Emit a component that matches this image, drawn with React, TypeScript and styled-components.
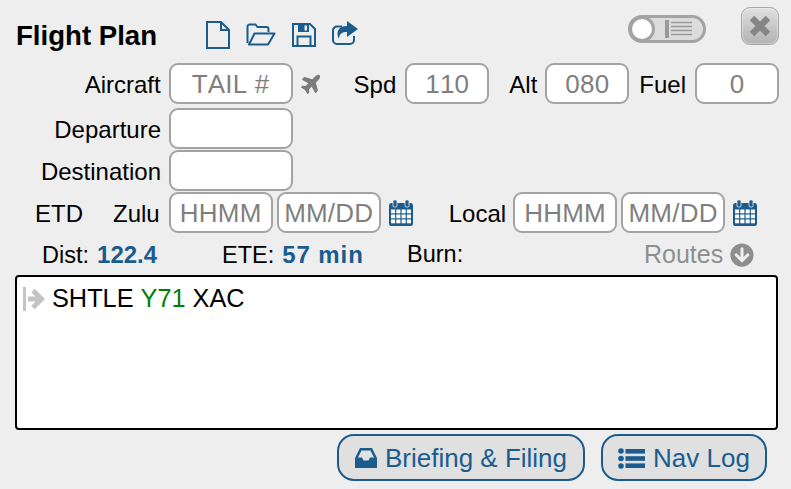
import React from "react";
import styled, { createGlobalStyle } from "styled-components";
import { FaPlane, FaArrowCircleDown } from "react-icons/fa";

const blue = "#1b5c8f";

const Global = createGlobalStyle`
  html, body { margin: 0; padding: 0; background: #eeeeee; }
  body { font-family: "Liberation Sans", Arial, sans-serif; color: #000; overflow: hidden; font-kerning: none; }
`;

const Panel = styled.div`
  width: 791px;
  height: 489px;
  box-sizing: border-box;
  padding: 7px 12px 0 15px;
  background: #eeeeee;
  display: flex;
  flex-direction: column;
`;

const Header = styled.div`
  display: flex;
  align-items: flex-start;
  height: 56px;
`;

const Title = styled.h1`
  margin: 14px 0 0 1px;
  font-size: 27.6px;
  line-height: 30px;
  font-weight: bold;
  width: 190px;
`;

const ToolIcons = styled.div`
  display: flex;
  align-items: flex-start;
  margin-top: 14px;
  gap: 16px;
  svg { display: block; }
`;

const Toggle = styled.div`
  margin: 8px 0 0 auto;
  width: 78px;
  height: 28px;
  box-sizing: border-box;
  border: 3px solid #a3a3a3;
  border-radius: 14px;
  background: #dcdcdc;
  display: flex;
  align-items: center;
  padding-left: 1px;
  gap: 13px;
  color: #9a9a9a;
`;

const Knob = styled.span`
  width: 20px;
  height: 20px;
  border-radius: 50%;
  background: #fff;
  box-shadow: 0 0 0 3px #a3a3a3;
`;

const CloseButton = styled.button`
  margin-left: 35px;
  width: 38px;
  height: 38px;
  padding: 0;
  box-sizing: border-box;
  border: 1px solid #a8a8a8;
  border-radius: 9px;
  background: linear-gradient(#e0e0e0, #b2b2b2);
  display: flex;
  align-items: center;
  justify-content: center;
  box-shadow: inset 0 0 2px #fff;
`;

const Row = styled.div<{ $h: number; $mb?: number }>`
  display: flex;
  align-items: center;
  height: ${(p) => p.$h}px;
  margin-bottom: ${(p) => p.$mb ?? 0}px;
`;

const Label = styled.label<{ $w?: number; $ml?: number; $mr?: number; $dy?: number }>`
  font-size: 24px;
  line-height: 28px;
  text-align: right;
  ${(p) => (p.$w ? `width: ${p.$w}px;` : "")}
  margin-left: ${(p) => p.$ml ?? 0}px;
  margin-right: ${(p) => p.$mr ?? 9}px;
  padding-top: ${(p) => p.$dy ?? 2}px;
  white-space: nowrap;
`;

const Field = styled.input<{ $w: number; $ml?: number }>`
  width: ${(p) => p.$w}px;
  height: 41px;
  margin-left: ${(p) => p.$ml ?? 0}px;
  box-sizing: border-box;
  border: 2px solid #a3a3a3;
  border-radius: 9px;
  background: #fff;
  padding: 2px 0 0;
  text-align: center;
  font: 26px "Liberation Sans", Arial, sans-serif;
  letter-spacing: 0.2px;
  font-kerning: none;
  color: #7f7f7f;
  outline: none;
  &::placeholder { color: #7f7f7f; opacity: 1; }
`;

const PlaneIcon = styled(FaPlane)`
  color: #7c7c7c;
  margin: 0 31px 0 8px;
  transform: translateY(-1px) rotate(-45deg);
`;

const CalSvg = styled.svg`
  margin-left: 8px;
  flex: none;
`;

const Stats = styled.div`
  display: flex;
  align-items: center;
  height: 42px;
  font-size: 23.5px;
  padding-left: 27px;
  padding-top: 1px;
  box-sizing: border-box;
`;

const Stat = styled.span<{ $w: number }>`
  width: ${(p) => p.$w}px;
  white-space: pre;
`;

const Value = styled.b<{ $track?: number }>`
  color: ${blue};
  font-size: 24px;
  margin-left: 1.5px;
  letter-spacing: ${(p) => p.$track ?? 0}px;
`;

const Routes = styled.span`
  margin-left: 180px;
  display: flex;
  align-items: center;
  gap: 7px;
  color: #8e8e8e;
  font-size: 25px;
`;

const RouteBox = styled.div`
  width: 763px;
  height: 155px;
  box-sizing: border-box;
  border: 2px solid #000;
  border-radius: 4px;
  background: #fff;
  padding: 6px 0 0 6px;
  display: flex;
  align-items: flex-start;
  font-size: 25.3px;
  line-height: 30px;
`;

const Enter = styled.svg`
  margin: 4px 6px 0 0;
  flex: none;
`;

const Fix = styled.span`
  color: #008000;
`;

const Actions = styled.div`
  display: flex;
  justify-content: flex-end;
  gap: 16px;
  margin-top: 4px;
  padding-right: 12px;
`;

const ActionButton = styled.button<{ $w: number }>`
  width: ${(p) => p.$w}px;
  height: 47px;
  box-sizing: border-box;
  border: 2px solid ${blue};
  border-radius: 17px;
  background: #e0e0e0;
  color: ${blue};
  font: 26px "Liberation Sans", Arial, sans-serif;
  font-kerning: none;
  display: flex;
  align-items: center;
  justify-content: center;
  gap: 8px;
  padding: 1px 0 0;
  svg { flex: none; }
`;

const FileIcon = () => (
  <svg width="24" height="28" viewBox="0 0 24 28" fill="none" stroke={blue} strokeWidth="2">
    <path d="M1 1H15L23 9V27H1Z" />
    <path d="M15 1V9H23" />
  </svg>
);

const FolderIcon = () => (
  <svg width="30" height="23" viewBox="0 0 30 23" fill="none" stroke={blue} strokeWidth="2" style={{ marginTop: 2 }}>
    <path d="M1.5 20V3.5A2 2 0 0 1 3.5 1.5H9.5L11.5 4H20.5A2 2 0 0 1 22.5 6V9" />
    <path d="M3 21.5H22L28.5 10.5H8.5Z" strokeLinejoin="round" />
  </svg>
);

const SaveIcon = () => (
  <svg width="24" height="24" viewBox="0 0 24 24" style={{ marginTop: 2 }}>
    <path d="M1 1H18L23 6V23H1Z" fill="none" stroke={blue} strokeWidth="2" />
    <path fillRule="evenodd" d="M6 1H17V9H6ZM12.5 2.5V7.5H15V2.5Z" fill={blue} />
    <path d="M5.5 23V13.5H18.5V23" fill="none" stroke={blue} strokeWidth="2" />
  </svg>
);

const ShareIcon = () => (
  <svg width="26" height="24" viewBox="0 0 26 24">
    <path d="M10 5.5H5A4 4 0 0 0 1 9.5V19A4 4 0 0 0 5 23H18A4 4 0 0 0 22 19V15" fill="none" stroke={blue} strokeWidth="2" />
    <path d="M15 0L26 8L15 16V11C10 11 7.5 12.5 7 18C3.5 11.5 6 5 15 5Z" fill={blue} />
  </svg>
);

const CalendarIcon = () => (
  <CalSvg width="24" height="26" viewBox="0 0 24 26">
    <rect x="0" y="3" width="24" height="23" rx="2.5" fill={blue} />
    <rect x="4" y="0" width="4" height="7" rx="1.2" fill={blue} stroke="#eeeeee" strokeWidth="0.8" />
    <rect x="16" y="0" width="4" height="7" rx="1.2" fill={blue} stroke="#eeeeee" strokeWidth="0.8" />
    {[9.5, 14.5, 19.5].map((y) =>
      [2, 7.3, 12.6, 17.9].map((x) => (
        <rect key={`${x}-${y}`} x={x} y={y} width="4.1" height="3.8" fill="#ffffff" />
      ))
    )}
  </CalSvg>
);

const InboxIcon = () => (
  <svg width="22" height="20" viewBox="0 0 22 20">
    <path fillRule="evenodd" d="M5 0H17L22 10V20H0V10ZM6.5 2.5L3 9.5H7L8.5 12.5H13.5L15 9.5H19L15.5 2.5Z" fill={blue} />
  </svg>
);

const ListIcon = () => (
  <svg width="27" height="21" viewBox="0 0 27 21">
    <circle cx="3" cy="3" r="2.8" fill={blue} />
    <circle cx="3" cy="10.5" r="2.8" fill={blue} />
    <circle cx="3" cy="18" r="2.8" fill={blue} />
    <rect x="7.5" y="1" width="19.5" height="4.6" fill={blue} />
    <rect x="7.5" y="8.2" width="19.5" height="4.6" fill={blue} />
    <rect x="7.5" y="15.4" width="19.5" height="4.6" fill={blue} />
  </svg>
);

export default function App() {
  return (
    <Panel>
      <Global />
      <Header>
        <Title>Flight Plan</Title>
        <ToolIcons>
          <FileIcon />
          <FolderIcon />
          <SaveIcon />
          <ShareIcon />
        </ToolIcons>
        <Toggle>
          <Knob />
          <svg width="27" height="18" viewBox="0 0 27 18">
            <rect x="0" y="0" width="4" height="18" fill="currentColor" />
            <path d="M6 2.5h21M6 6.5h21M6 10.5h21M6 14.5h21" stroke="currentColor" strokeWidth="1.6" />
          </svg>
        </Toggle>
        <CloseButton aria-label="Close">
          <svg width="24" height="24" viewBox="0 0 24 24">
            <path d="M4 4l16 16M20 4L4 20" stroke="#858585" strokeWidth="6.5" />
          </svg>
        </CloseButton>
      </Header>
      <Row $h={41} $mb={4}>
        <Label $w={146} $mr={8}>Aircraft</Label>
        <Field $w={124} placeholder="TAIL #" />
        <PlaneIcon size={22} />
        <Label $mr={9}>Spd</Label>
        <Field $w={84} defaultValue="110" />
        <Label $ml={20} $mr={8}>Alt</Label>
        <Field $w={84} defaultValue="080" />
        <Label $ml={10}>Fuel</Label>
        <Field $w={84} defaultValue="0" />
      </Row>
      <Row $h={41} $mb={1}>
        <Label $w={146} $mr={8}>Departure</Label>
        <Field $w={124} />
      </Row>
      <Row $h={41} $mb={1}>
        <Label $w={146} $mr={8}>Destination</Label>
        <Field $w={124} />
      </Row>
      <Row $h={41}>
        <Label $ml={20} $mr={30}>ETD</Label>
        <Label $mr={9}>Zulu</Label>
        <Field $w={104} placeholder="HHMM" />
        <Field $w={104} $ml={4} placeholder="MM/DD" />
        <CalendarIcon />
        <Label $ml={36} $mr={7}>Local</Label>
        <Field $w={104} placeholder="HHMM" />
        <Field $w={104} $ml={4} placeholder="MM/DD" />
        <CalendarIcon />
      </Row>
      <Stats>
        <Stat $w={180}>Dist: <Value>122.4</Value></Stat>
        <Stat $w={185}>ETE: <Value $track={0.9}>57 min</Value></Stat>
        <Stat $w={57}>Burn:</Stat>
        <Routes>Routes <FaArrowCircleDown size={24} /></Routes>
      </Stats>
      <RouteBox>
        <Enter width="23" height="24" viewBox="0 0 23 24">
          <rect x="0" y="0" width="3" height="24" fill="#c4c4c4" />
          <path d="M5 12H18M10 3.5L18.5 12L10 20.5" fill="none" stroke="#c4c4c4" strokeWidth="5" />
        </Enter>
        <span>SHTLE <Fix>Y71</Fix> XAC</span>
      </RouteBox>
      <Actions>
        <ActionButton $w={248}><InboxIcon />Briefing &amp; Filing</ActionButton>
        <ActionButton $w={166}><ListIcon />Nav Log</ActionButton>
      </Actions>
    </Panel>
  );
}
